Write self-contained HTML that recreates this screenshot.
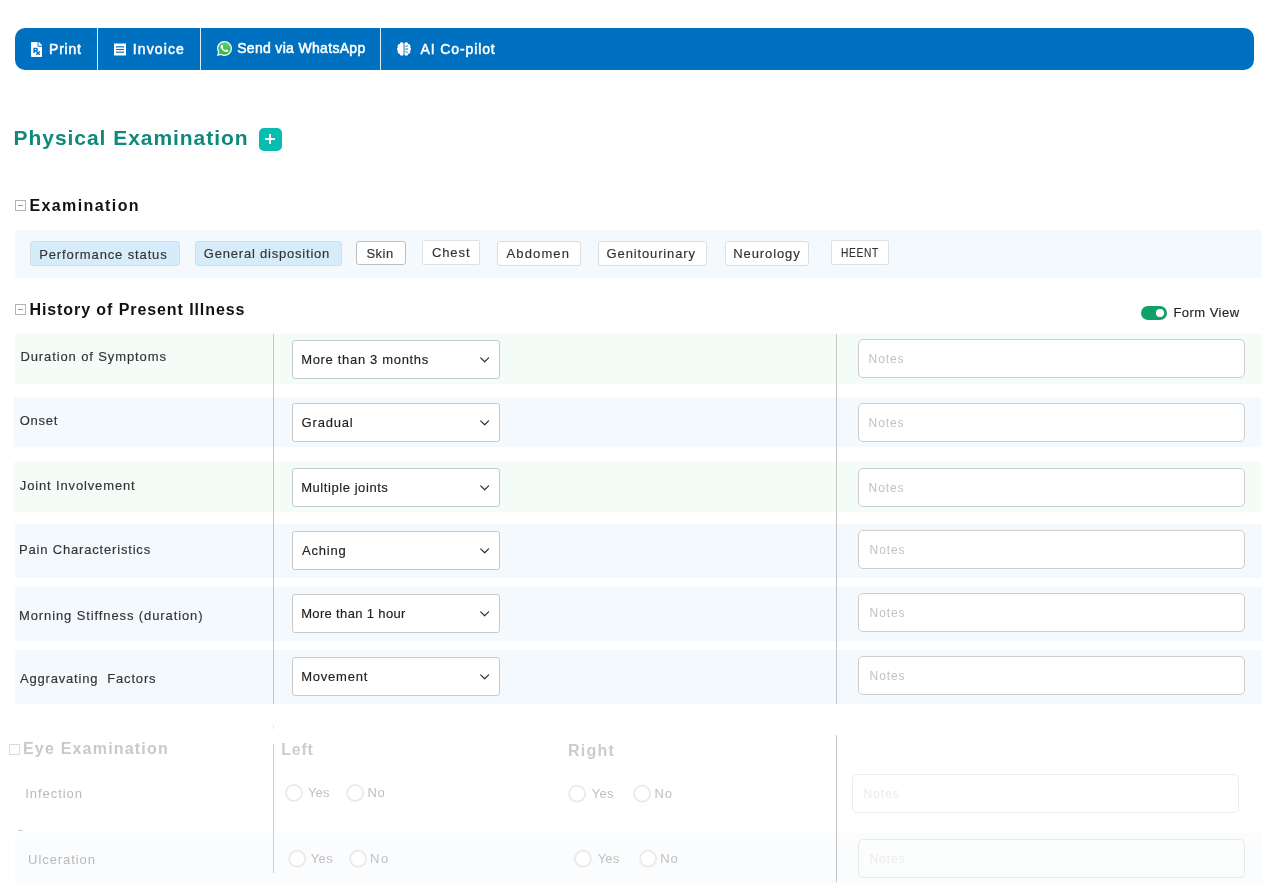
<!DOCTYPE html><html><head><meta charset="utf-8"><title>Physical Examination</title><style>
html,body{margin:0;padding:0;background:#fff;}
body{width:1269px;height:893px;position:relative;overflow:hidden;font-family:"Liberation Sans",sans-serif;}
#w{position:absolute;left:0;top:0;width:1269px;height:893px;will-change:transform;}
.a{position:absolute;box-sizing:border-box;}
.t{position:absolute;white-space:pre;line-height:1;font-family:"Liberation Sans",sans-serif;}
.bar{left:15px;top:28px;width:1239px;height:42px;background:#0070c0;border-radius:10px;}
.dv{top:28px;width:1px;height:42px;background:rgba(255,255,255,.88);}
.band{background:#f4f9fe;}
.bandg{background:#f3fcf7;}
.chip{border:1px solid #dcdcdc;border-radius:3px;background:#fff;}
.chip.on{background:#d6ecfb;border-color:#d3dde4;}
.sel{left:292px;width:208px;height:39px;border:1px solid #c9c9c9;border-radius:3px;background:#fff;}
.inp{left:858px;width:387px;height:39px;border:1px solid #cdcdcd;border-radius:5px;background:#fff;}
.vl{width:1px;background:#c6c6c6;}
.cb{width:11px;height:11px;border:1px solid #b3b3b3;background:#fff;}
.cb i{position:absolute;left:2px;top:4px;width:5px;height:1px;background:#9a9a9a;}
.rd{width:17px;height:17px;border-radius:50%;border:1.5px solid #e3e3e3;background:#fff;}
</style></head><body><div id="w">
<div class="a bar"></div>
<div class="a dv" style="left:97px"></div>
<div class="a dv" style="left:200px"></div>
<div class="a dv" style="left:380px"></div>

<svg class="a" style="left:31px;top:42px" width="11.25" height="15" viewBox="0 0 384 512"><path fill="#fff" d="M224 136V0H24C10.7 0 0 10.7 0 24v464c0 13.3 10.7 24 24 24h336c13.3 0 24-10.7 24-24V160H248c-13.2 0-24-10.8-24-24zm68.53 179.48l11.31 11.31c6.25 6.25 6.25 16.38 0 22.63l-29.9 29.9L304 409.38c6.25 6.25 6.25 16.38 0 22.63l-11.31 11.31c-6.25 6.25-16.38 6.25-22.63 0L240 413.25l-30.06 30.06c-6.25 6.25-16.38 6.25-22.63 0L176 432c-6.25-6.25-6.25-16.38 0-22.63l30.06-30.06L146.74 320H128v48c0 8.84-7.16 16-16 16H96c-8.84 0-16-7.16-16-16V208c0-8.84 7.16-16 16-16h80c35.35 0 64 28.65 64 64 0 24.22-13.62 45.05-33.46 55.92L240 345.38l29.9-29.9c6.25-6.25 16.38-6.25 22.63 0zM176 272h-48v-32h48c8.82 0 16 7.18 16 16s-7.18 16-16 16zm208-150.1v6.1H256V0h6.1c6.4 0 12.5 2.5 17 7l97.9 98c4.5 4.5 7 10.6 7 16.9z"/></svg>
<svg class="a" style="left:114px;top:43px" width="12" height="13" viewBox="0 0 12 13"><path fill="#fff" d="M0 1 L0.75 0 L1.50 1.0 L2.25 0 L3.00 1.0 L3.75 0 L4.50 1.0 L5.25 0 L6.00 1.0 L6.75 0 L7.50 1.0 L8.25 0 L9.00 1.0 L9.75 0 L10.50 1.0 L11.25 0 L12.00 1.0 V12 L11.25 13 L10.50 12.0 L9.75 13 L9.00 12.0 L8.25 13 L7.50 12.0 L6.75 13 L6.00 12.0 L5.25 13 L4.50 12.0 L3.75 13 L3.00 12.0 L2.25 13 L1.50 12.0 L0.75 13 L0.00 12.0 Z"/><path stroke="#0070c0" stroke-width="1.1" d="M2 6.5H10"/><path stroke="#0070c0" stroke-opacity=".78" stroke-width="1.5" d="M2 3.8H10M2 9.2H10"/></svg>
<div class="a" style="left:217.6px;top:41.6px;width:13.8px;height:13.8px;border-radius:50%;background:linear-gradient(#62d26b,#2bb741);"></div>
<svg class="a" style="left:217px;top:40px" width="15" height="17.14" viewBox="0 0 448 512"><path fill="#2fb945" d="M50 330L34 448l110-26l40-60z"/><path fill="#fff" d="M380.9 97.1C339 55.1 283.2 32 223.9 32c-122.4 0-222 99.6-222 222 0 39.1 10.2 77.3 29.6 111L0 480l117.7-30.9c32.4 17.7 68.9 27 106.1 27h.1c122.3 0 224.1-99.6 224.1-222 0-59.3-25.2-115-67.1-157zm-157 341.6c-33.2 0-65.7-8.9-94-25.7l-6.7-4-69.8 18.3L72 359.2l-4.4-7c-18.5-29.4-28.2-63.3-28.2-98.2 0-101.7 82.8-184.5 184.6-184.5 49.3 0 95.6 19.2 130.4 54.1 34.8 34.9 56.2 81.2 56.1 130.5 0 101.8-84.9 184.6-186.6 184.6zm101.2-138.2c-5.5-2.8-32.8-16.2-37.9-18-5.1-1.9-8.8-2.8-12.5 2.8-3.7 5.6-14.3 18-17.6 21.8-3.2 3.7-6.5 4.2-12 1.4-32.600-16.300-54-29.100-75.500-66-5.700-9.800 5.700-9.100 16.300-30.300 1.800-3.700.9-6.900-.5-9.700-1.400-2.800-12.500-30.100-17.100-41.200-4.500-10.800-9.100-9.300-12.500-9.500-3.200-.2-6.900-.2-10.600-.2-3.700 0-9.700 1.400-14.800 6.900-5.100 5.600-19.400 19-19.400 46.300 0 27.300 19.900 53.700 22.600 57.400 2.800 3.700 39.100 59.700 94.800 83.800 35.200 15.200 49 16.500 66.600 13.900 10.700-1.600 32.800-13.400 37.400-26.400 4.600-13 4.600-24.100 3.200-26.400-1.300-2.500-5-3.900-10.500-6.600z"/></svg>
<svg class="a" style="left:397px;top:42px" width="14" height="14" viewBox="0 0 14 14"><g fill="#fff"><circle cx="4.7" cy="2.2" r="2.0"/><circle cx="2.7" cy="4.2" r="2.1"/><circle cx="2.0" cy="7.0" r="2.0"/><circle cx="2.7" cy="9.8" r="2.1"/><circle cx="4.7" cy="11.8" r="2.0"/><circle cx="9.3" cy="2.2" r="2.0"/><circle cx="11.3" cy="4.2" r="2.1"/><circle cx="12.0" cy="7.0" r="2.0"/><circle cx="11.3" cy="9.8" r="2.1"/><circle cx="9.3" cy="11.8" r="2.0"/><rect x="2.5" y="2.5" width="9" height="9"/></g><rect x="6.35" y="0" width="1.3" height="14" fill="#0070c0"/><rect x="6.35" y="0.8" width="1.3" height="12.4" fill="#a6cfee"/><g fill="none" stroke="#2b86cd" stroke-width="0.8"><path d="M7.7 4.6H9.1L9.9 3.9M7.7 7.1H11.2M7.7 9.6H9.1L9.9 10.3"/></g><circle cx="10.2" cy="3.8" r="0.7" fill="#fff" stroke="#2b86cd" stroke-width="0.55"/><circle cx="10.2" cy="10.4" r="0.7" fill="#fff" stroke="#2b86cd" stroke-width="0.55"/><rect x="9.1" y="6.2" width="1.6" height="1.8" fill="#6aaee0"/></svg>

<div class="a" style="left:258.5px;top:127.5px;width:23px;height:23px;background:#06bdaf;border-radius:5px;"></div>
<div class="a" style="left:265px;top:138px;width:10px;height:2px;background:#fff;"></div>
<div class="a" style="left:269px;top:134px;width:2px;height:10px;background:#fff;"></div>
<div class="a cb" style="left:15px;top:200px;"><i></i></div>
<div class="a cb" style="left:15px;top:304px;"><i></i></div>
<div class="a band" style="left:15px;top:230px;width:1247px;height:48px;"></div>
<div class="a chip on" style="left:30px;top:241px;width:150px;height:25px;"></div>
<div class="a chip on" style="left:195px;top:241px;width:147px;height:25px;"></div>
<div class="a chip" style="left:356px;top:241px;width:50px;height:24px;border-color:#bdbdbd;"></div>
<div class="a chip" style="left:422px;top:240px;width:58px;height:25px;border-radius:1.5px;border-color:#e0e0e0;"></div>
<div class="a chip" style="left:497px;top:241px;width:84px;height:25px;"></div>
<div class="a chip" style="left:598px;top:241px;width:109px;height:25px;"></div>
<div class="a chip" style="left:725px;top:241px;width:84px;height:25px;"></div>
<div class="a chip" style="left:831px;top:240px;width:58px;height:25px;border-radius:1.5px;border-color:#e0e0e0;"></div>
<div class="a" style="left:1141px;top:306px;width:26px;height:14px;border-radius:7px;background:#12a06a;"></div>
<div class="a" style="left:1156px;top:309px;width:8px;height:8px;border-radius:4px;background:#fff;"></div>
<div class="a bandg" style="left:15px;top:334px;width:1247px;height:50px;"></div>
<div class="a sel" style="top:340px;"></div>
<svg class="a" style="left:479px;top:356px" width="12" height="8" viewBox="0 0 12 8"><path d="M1.7 1.9 L5.65 5.8 L9.6 1.9" fill="none" stroke="#343a40" stroke-width="1.3" stroke-linecap="round" stroke-linejoin="round"/></svg>
<div class="a inp" style="top:339px;"></div>
<div class="a band" style="left:14px;top:397px;width:1247px;height:50px;"></div>
<div class="a sel" style="top:403px;"></div>
<svg class="a" style="left:479px;top:419px" width="12" height="8" viewBox="0 0 12 8"><path d="M1.7 1.9 L5.65 5.8 L9.6 1.9" fill="none" stroke="#343a40" stroke-width="1.3" stroke-linecap="round" stroke-linejoin="round"/></svg>
<div class="a inp" style="top:403px;"></div>
<div class="a bandg" style="left:14px;top:462px;width:1247px;height:50px;"></div>
<div class="a sel" style="top:468px;"></div>
<svg class="a" style="left:479px;top:484px" width="12" height="8" viewBox="0 0 12 8"><path d="M1.7 1.9 L5.65 5.8 L9.6 1.9" fill="none" stroke="#343a40" stroke-width="1.3" stroke-linecap="round" stroke-linejoin="round"/></svg>
<div class="a inp" style="top:468px;"></div>
<div class="a band" style="left:15px;top:524px;width:1247px;height:54px;"></div>
<div class="a sel" style="top:531px;"></div>
<svg class="a" style="left:479px;top:547px" width="12" height="8" viewBox="0 0 12 8"><path d="M1.7 1.9 L5.65 5.8 L9.6 1.9" fill="none" stroke="#343a40" stroke-width="1.3" stroke-linecap="round" stroke-linejoin="round"/></svg>
<div class="a inp" style="top:530px;"></div>
<div class="a band" style="left:15px;top:587px;width:1247px;height:54px;"></div>
<div class="a sel" style="top:594px;"></div>
<svg class="a" style="left:479px;top:610px" width="12" height="8" viewBox="0 0 12 8"><path d="M1.7 1.9 L5.65 5.8 L9.6 1.9" fill="none" stroke="#343a40" stroke-width="1.3" stroke-linecap="round" stroke-linejoin="round"/></svg>
<div class="a inp" style="top:593px;"></div>
<div class="a band" style="left:15px;top:650px;width:1247px;height:54px;"></div>
<div class="a sel" style="top:657px;"></div>
<svg class="a" style="left:479px;top:673px" width="12" height="8" viewBox="0 0 12 8"><path d="M1.7 1.9 L5.65 5.8 L9.6 1.9" fill="none" stroke="#343a40" stroke-width="1.3" stroke-linecap="round" stroke-linejoin="round"/></svg>
<div class="a inp" style="top:656px;"></div>
<div class="a vl" style="left:273px;top:334px;height:370px;"></div>
<div class="a vl" style="left:836px;top:334px;height:370px;"></div>
<div class="a" style="left:273px;top:725px;width:1px;height:4px;background:#e6e6e6;"></div>
<div class="a" style="left:15px;top:833px;width:1247px;height:51px;background:#fbfcfe;"></div>
<div class="a vl" style="left:273px;top:744px;height:129px;background:#cfcfcf;"></div>
<div class="a vl" style="left:836px;top:735px;height:147px;background:#c6c6c6;"></div>
<div class="a cb" style="left:9px;top:744px;border-color:#dcdcdc;"></div>
<div class="a" style="left:18px;top:830px;width:5px;height:1px;background:#c8c8c8;"></div>
<svg class="a" style="left:0;top:770px" width="700" height="110" viewBox="0 770 700 110"><circle cx="293.95" cy="792.9" r="8" fill="#fff" stroke="#e9e9e9" stroke-width="1.7"/><circle cx="355.15" cy="792.9" r="8" fill="#fff" stroke="#e9e9e9" stroke-width="1.7"/><circle cx="577.1" cy="793.7" r="8" fill="#fff" stroke="#e9e9e9" stroke-width="1.7"/><circle cx="642.1" cy="793.7" r="8" fill="#fff" stroke="#e9e9e9" stroke-width="1.7"/><circle cx="297.15" cy="858.7" r="8" fill="#fff" stroke="#e9e9e9" stroke-width="1.7"/><circle cx="358.1" cy="858.7" r="8" fill="#fff" stroke="#e9e9e9" stroke-width="1.7"/><circle cx="583" cy="858.7" r="8" fill="#fff" stroke="#e9e9e9" stroke-width="1.7"/><circle cx="648.05" cy="858.7" r="8" fill="#fff" stroke="#e9e9e9" stroke-width="1.7"/></svg>
<div class="a inp" style="left:852px;top:774px;width:387px;border-color:#ebebeb;"></div>
<div class="a inp" style="left:858px;top:839px;width:387px;border-color:#e9e9e9;background:#fcfdfd;"></div>
<span class="t" style="left:49.12px;top:42.0px;font-size:14px;font-weight:400;letter-spacing:0.72px;color:#ffffff;-webkit-text-stroke:0.5px #ffffff;">Print</span>
<span class="t" style="left:132.87px;top:42.0px;font-size:14px;font-weight:400;letter-spacing:1.11px;color:#ffffff;-webkit-text-stroke:0.5px #ffffff;">Invoice</span>
<span class="t" style="left:237.2px;top:41.0px;font-size:14px;font-weight:400;letter-spacing:0.32px;color:#ffffff;-webkit-text-stroke:0.5px #ffffff;">Send via WhatsApp</span>
<span class="t" style="left:420.4px;top:42.0px;font-size:14px;font-weight:400;letter-spacing:0.9px;color:#ffffff;-webkit-text-stroke:0.5px #ffffff;">AI Co-pilot</span>
<span class="t" style="left:13.58px;top:127.0px;font-size:21px;font-weight:700;letter-spacing:0.95px;color:#0e897c;">Physical Examination</span>
<span class="t" style="left:29.41px;top:198.0px;font-size:16px;font-weight:700;letter-spacing:1.41px;color:#111111;">Examination</span>
<span class="t" style="left:29.41px;top:302.0px;font-size:16px;font-weight:700;letter-spacing:0.92px;color:#111111;">History of Present Illness</span>
<span class="t" style="left:39.23px;top:248.0px;font-size:13px;font-weight:400;letter-spacing:0.87px;color:#333333;-webkit-text-stroke:0.15px #333333;">Performance status</span>
<span class="t" style="left:203.8px;top:247.0px;font-size:13px;font-weight:400;letter-spacing:0.79px;color:#333333;-webkit-text-stroke:0.15px #333333;">General disposition</span>
<span class="t" style="left:366.45px;top:247.0px;font-size:13px;font-weight:400;letter-spacing:0.46px;color:#333333;-webkit-text-stroke:0.15px #333333;">Skin</span>
<span class="t" style="left:431.9px;top:246.0px;font-size:13px;font-weight:400;letter-spacing:0.93px;color:#333333;-webkit-text-stroke:0.15px #333333;">Chest</span>
<span class="t" style="left:506.49px;top:247.0px;font-size:13px;font-weight:400;letter-spacing:1.14px;color:#333333;-webkit-text-stroke:0.15px #333333;">Abdomen</span>
<span class="t" style="left:606.6px;top:247.0px;font-size:13px;font-weight:400;letter-spacing:0.86px;color:#333333;-webkit-text-stroke:0.15px #333333;">Genitourinary</span>
<span class="t" style="left:733.33px;top:247.0px;font-size:13px;font-weight:400;letter-spacing:0.89px;color:#333333;-webkit-text-stroke:0.15px #333333;">Neurology</span>
<span class="t" style="left:840.7px;top:247px;font-size:12px;letter-spacing:0.8px;color:#333333;-webkit-text-stroke:0.15px #333333;transform-origin:0 0;transform:scaleX(0.8517);">HEENT</span>
<span class="t" style="left:1173.43px;top:306.0px;font-size:13px;font-weight:400;letter-spacing:0.47px;color:#222222;-webkit-text-stroke:0.15px #222222;">Form View</span>
<span class="t" style="left:20.43px;top:350.0px;font-size:13px;font-weight:400;letter-spacing:0.89px;color:#333333;-webkit-text-stroke:0.15px #333333;">Duration of Symptoms</span>
<span class="t" style="left:19.74px;top:414.0px;font-size:13px;font-weight:400;letter-spacing:0.71px;color:#333333;-webkit-text-stroke:0.15px #333333;">Onset</span>
<span class="t" style="left:19.78px;top:478.5px;font-size:13px;font-weight:400;letter-spacing:0.86px;color:#333333;-webkit-text-stroke:0.15px #333333;">Joint Involvement</span>
<span class="t" style="left:19.03px;top:543.0px;font-size:13px;font-weight:400;letter-spacing:0.82px;color:#333333;-webkit-text-stroke:0.15px #333333;">Pain Characteristics</span>
<span class="t" style="left:19.03px;top:609.0px;font-size:13px;font-weight:400;letter-spacing:0.89px;color:#333333;-webkit-text-stroke:0.15px #333333;">Morning Stiffness (duration)</span>
<span class="t" style="left:19.89px;top:672.0px;font-size:13px;font-weight:400;letter-spacing:0.83px;color:#333333;-webkit-text-stroke:0.15px #333333;">Aggravating  Factors</span>
<span class="t" style="left:301.23px;top:353.0px;font-size:13px;font-weight:400;letter-spacing:0.67px;color:#222222;-webkit-text-stroke:0.15px #222222;">More than 3 months</span>
<span class="t" style="left:301.6px;top:416.0px;font-size:13px;font-weight:400;letter-spacing:0.82px;color:#222222;-webkit-text-stroke:0.15px #222222;">Gradual</span>
<span class="t" style="left:301.13px;top:481.0px;font-size:13px;font-weight:400;letter-spacing:0.57px;color:#222222;-webkit-text-stroke:0.15px #222222;">Multiple joints</span>
<span class="t" style="left:301.99px;top:544.0px;font-size:13px;font-weight:400;letter-spacing:0.81px;color:#222222;-webkit-text-stroke:0.15px #222222;">Aching</span>
<span class="t" style="left:301.13px;top:607.0px;font-size:13px;font-weight:400;letter-spacing:0.35px;color:#222222;-webkit-text-stroke:0.15px #222222;">More than 1 hour</span>
<span class="t" style="left:301.13px;top:670.0px;font-size:13px;font-weight:400;letter-spacing:0.8px;color:#222222;-webkit-text-stroke:0.15px #222222;">Movement</span>
<span class="t" style="left:868.6px;top:353.0px;font-size:12px;font-weight:400;letter-spacing:0.87px;color:#c2c2c2;">Notes</span>
<span class="t" style="left:868.6px;top:417.0px;font-size:12px;font-weight:400;letter-spacing:0.87px;color:#c2c2c2;">Notes</span>
<span class="t" style="left:868.6px;top:482.0px;font-size:12px;font-weight:400;letter-spacing:0.87px;color:#c2c2c2;">Notes</span>
<span class="t" style="left:869.6px;top:544.0px;font-size:12px;font-weight:400;letter-spacing:0.87px;color:#c2c2c2;">Notes</span>
<span class="t" style="left:869.6px;top:607.0px;font-size:12px;font-weight:400;letter-spacing:0.87px;color:#c2c2c2;">Notes</span>
<span class="t" style="left:869.6px;top:670.0px;font-size:12px;font-weight:400;letter-spacing:0.87px;color:#c2c2c2;">Notes</span>
<span class="t" style="left:23.01px;top:741.0px;font-size:16px;font-weight:700;letter-spacing:1.19px;color:#c9c9c9;">Eye Examination</span>
<span class="t" style="left:281.21px;top:742.0px;font-size:16px;font-weight:700;letter-spacing:0.8px;color:#cccccc;">Left</span>
<span class="t" style="left:568.11px;top:743.0px;font-size:16px;font-weight:700;letter-spacing:1.19px;color:#cccccc;">Right</span>
<span class="t" style="left:25.27px;top:787.0px;font-size:13px;font-weight:400;letter-spacing:0.94px;color:#b9b9b9;">Infection</span>
<span class="t" style="left:28.1px;top:853.0px;font-size:13px;font-weight:400;letter-spacing:0.93px;color:#b9b9b9;">Ulceration</span>
<span class="t" style="left:307.88px;top:786.0px;font-size:13px;font-weight:400;letter-spacing:0.27px;color:#c0c0c0;">Yes</span>
<span class="t" style="left:367.52px;top:786.0px;font-size:13px;font-weight:400;letter-spacing:0.68px;color:#c0c0c0;">No</span>
<span class="t" style="left:591.78px;top:787.0px;font-size:13px;font-weight:400;letter-spacing:0.22px;color:#c0c0c0;">Yes</span>
<span class="t" style="left:654.42px;top:787.0px;font-size:13px;font-weight:400;letter-spacing:0.88px;color:#c0c0c0;">No</span>
<span class="t" style="left:310.78px;top:852.0px;font-size:13px;font-weight:400;letter-spacing:0.37px;color:#c0c0c0;">Yes</span>
<span class="t" style="left:370.12px;top:852.0px;font-size:13px;font-weight:400;letter-spacing:1.38px;color:#c0c0c0;">No</span>
<span class="t" style="left:597.68px;top:852.0px;font-size:13px;font-weight:400;letter-spacing:0.22px;color:#c0c0c0;">Yes</span>
<span class="t" style="left:660.32px;top:852.0px;font-size:13px;font-weight:400;letter-spacing:0.88px;color:#c0c0c0;">No</span>
<span class="t" style="left:863.5px;top:788.0px;font-size:12px;font-weight:400;letter-spacing:1.0px;color:#ebebeb;">Notes</span>
<span class="t" style="left:869.5px;top:853.0px;font-size:12px;font-weight:400;letter-spacing:0.95px;color:#ebebeb;">Notes</span>
</div></body></html>
